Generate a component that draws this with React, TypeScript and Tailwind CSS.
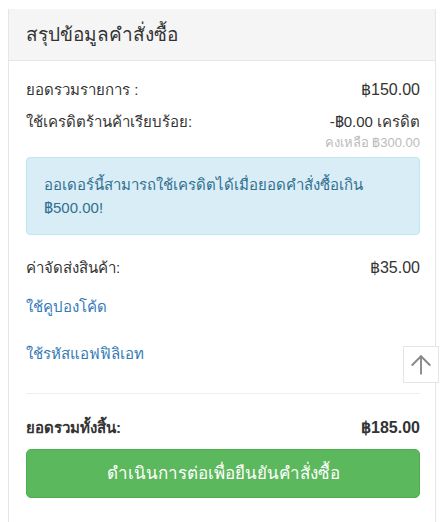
import { ArrowUp } from "lucide-react";

export default function App() {
  return (
    <div className="min-h-[522px] bg-white pt-[9px] pl-[8px] pr-[6px] text-[#333]" style={{ fontFamily: '"Liberation Sans", "Noto Sans", sans-serif' }}>
      <div className="border border-[#e6e6e6] border-t-0 border-b-0 h-[513px]">
        <div className="h-[52px] bg-[#f5f5f5] border-b border-[#e6e6e6] flex items-center pl-[17px] pr-[15px]">
          <h3 className="text-[19px] pt-[1px]">สรุปข้อมูลคำสั่งซื้อ</h3>
        </div>
        <div className="pl-[17px] pr-[15px] pt-[13px] text-[15px]">
          <div className="h-8 flex items-center justify-between">
            <span>ยอดรวมรายการ :</span>
            <span className="text-[16px]">฿150.00</span>
          </div>
          <div className="h-8 flex items-center justify-between">
            <span>ใช้เครดิตร้านค้าเรียบร้อย:</span>
            <span>-฿0.00 เครดิต</span>
          </div>
          <div className="mt-[-2px] h-[14px] text-right text-[13px] leading-[14px] text-[#bbb]">คงเหลือ ฿300.00</div>
          <div className="mt-[7px] h-[78px] rounded bg-[#d9edf7] border border-[#bce8f1] text-[#31708f] px-[17px] py-[15px] leading-[23px]">
            ออเดอร์นี้สามารถใช้เครดิตได้เมื่อยอดคำสั่งซื้อเกิน ฿500.00!
          </div>
          <div className="mt-[17px] h-8 flex items-center justify-between">
            <span>ค่าจัดส่งสินค้า:</span>
            <span className="text-[16px]">฿35.00</span>
          </div>
          <div className="mt-[7px] h-8 flex items-center">
            <a href="#" className="text-[#337ab7]">ใช้คูปองโค้ด</a>
          </div>
          <div className="mt-[15px] h-8 flex items-center">
            <a href="#" className="text-[#337ab7]">ใช้รหัสแอฟฟิลิเอท</a>
          </div>
          <div className="mt-[23px] border-t border-[#eee]" />
          <div className="mt-[18px] h-8 flex items-center justify-between font-bold">
            <span>ยอดรวมทั้งสิ้น:</span>
            <span className="text-[16px]">฿185.00</span>
          </div>
          <button className="mt-[5px] w-full h-[49px] rounded-[5px] bg-[#5cb85c] border border-[#4cae4c] text-white text-[17px] font-medium">
            ดำเนินการต่อเพื่อยืนยันคำสั่งซื้อ
          </button>
        </div>
      </div>
      <div className="fixed left-[403px] top-[346px] w-[36px] h-[37px] bg-white border border-[#e5e5e5] flex items-center justify-center">
        <ArrowUp size={30} strokeWidth={1.5} className="text-[#888]" />
      </div>
    </div>
  );
}
